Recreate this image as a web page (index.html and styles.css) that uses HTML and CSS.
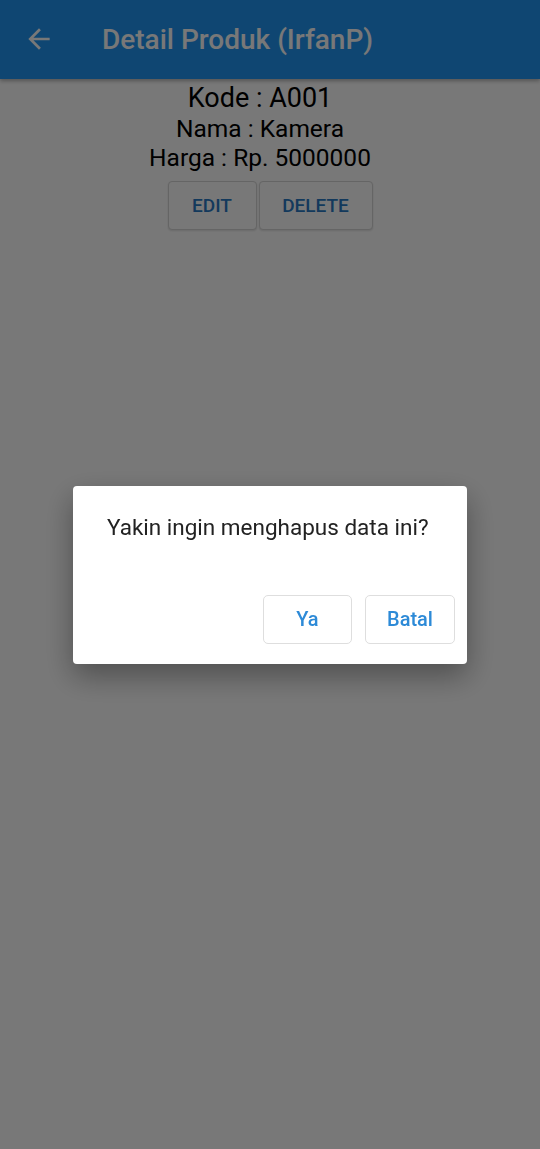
FILE: index.html
```html
<!DOCTYPE html>
<html lang="id">
<head>
<meta charset="utf-8">
<title>Detail Produk (IrfanP)</title>
<link rel="stylesheet" href="styles.css">
</head>
<body>
<header class="appbar">
  <svg class="back" viewBox="0 0 24 24" width="32" height="32" aria-hidden="true">
    <path d="M20 11H7.83l5.59-5.59L12 4l-8 8 8 8 1.41-1.41L7.83 13H20v-2z" fill="#ffffff"/>
  </svg>
  <h1 class="title">Detail Produk (IrfanP)</h1>
</header>
<main class="content">
  <p class="kode">Kode : A001</p>
  <p class="info">Nama : Kamera</p>
  <p class="info">Harga : Rp. 5000000</p>
  <div class="actions">
    <button class="btn btn-edit">EDIT</button>
    <button class="btn btn-delete">DELETE</button>
  </div>
</main>
<div class="scrim">
  <div class="dialog">
    <p class="dialog-text">Yakin ingin menghapus data ini?</p>
    <div class="dialog-actions">
      <button class="dbtn dbtn-ya">Ya</button>
      <button class="dbtn dbtn-batal">Batal</button>
    </div>
  </div>
</div>
</body>
</html>
```
FILE: styles.css
```css
* { box-sizing: border-box; }
html, body {
  margin: 0;
  padding: 0;
  background: #ffffff;
  font-family: Roboto, "Noto Sans", sans-serif;
  height: 100%;
}
.appbar {
  height: 79px;
  background: #2196f3;
  display: flex;
  align-items: center;
  padding-left: 23px;
  padding-bottom: 1px;
  box-shadow: 0 2px 4px rgba(0,0,0,0.3);
}
.back { flex: none; width: 32px; height: 32px; }
.title {
  margin: 0 0 0 47px;
  font-size: 28px;
  font-weight: 500;
  color: #ffffff;
}
.content {
  display: flex;
  flex-direction: column;
  align-items: center;
  padding-top: 4px;
}
.content p { margin: 0 20px 0 0; color: #000; }
.kode { font-size: 27px; line-height: 31px; }
.info { font-size: 24.5px; line-height: 29px; }
.actions {
  display: flex;
  gap: 2px;
  margin-top: 9px;
}
.btn {
  height: 49px;
  background: #ffffff;
  border: 1px solid #d6d6d6;
  border-radius: 4px;
  font-family: Roboto, sans-serif;
  font-size: 19px;
  font-weight: 500;
  color: #2979c4;
  padding: 0;
  box-shadow: 0 1px 2px rgba(0,0,0,0.12);
}
.btn-edit { width: 89px; }
.btn-delete { width: 114px; }
.scrim {
  position: fixed;
  inset: 0;
  background: rgba(0,0,0,0.53);
  display: flex;
  align-items: center;
  justify-content: center;
}
.dialog {
  width: 394px;
  height: 178px;
  background: #ffffff;
  border-radius: 4px;
  box-shadow: 0 12px 30px rgba(0,0,0,0.35);
  display: flex;
  flex-direction: column;
  justify-content: space-between;
  padding: 28px 12px 20px 34px;
}
.dialog-text {
  margin: 0;
  font-size: 22.5px;
  color: #222222;
}
.dialog-actions {
  display: flex;
  justify-content: flex-end;
  gap: 13px;
}
.dbtn {
  height: 49px;
  background: #ffffff;
  border: 1px solid #dedede;
  border-radius: 5px;
  font-family: Roboto, sans-serif;
  font-size: 20px;
  font-weight: 500;
  color: #2d8ad7;
  padding: 0;
}
.dbtn-ya { width: 89px; }
.dbtn-batal { width: 90px; }
```
